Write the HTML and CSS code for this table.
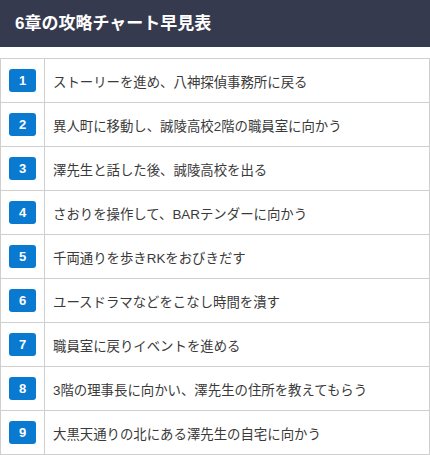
FILE: index.html
```html
<!DOCTYPE html>
<html lang="ja">
<head>
<meta charset="utf-8">
<link rel="stylesheet" href="styles.css">
</head>
<body>
<div class="head"><h2 class="title">6章の攻略チャート早見表</h2></div>
<table class="chart">
<tr><td class="num"><span class="badge">1</span></td><td class="txt">ストーリーを進め、八神探偵事務所に戻る</td></tr>
<tr><td class="num"><span class="badge">2</span></td><td class="txt">異人町に移動し、誠陵高校2階の職員室に向かう</td></tr>
<tr><td class="num"><span class="badge">3</span></td><td class="txt">澤先生と話した後、誠陵高校を出る</td></tr>
<tr><td class="num"><span class="badge">4</span></td><td class="txt">さおりを操作して、BARテンダーに向かう</td></tr>
<tr><td class="num"><span class="badge">5</span></td><td class="txt">千両通りを歩きRKをおびきだす</td></tr>
<tr><td class="num"><span class="badge">6</span></td><td class="txt">ユースドラマなどをこなし時間を潰す</td></tr>
<tr><td class="num"><span class="badge">7</span></td><td class="txt">職員室に戻りイベントを進める</td></tr>
<tr><td class="num"><span class="badge">8</span></td><td class="txt">3階の理事長に向かい、澤先生の住所を教えてもらう</td></tr>
<tr><td class="num"><span class="badge">9</span></td><td class="txt">大黒天通りの北にある澤先生の自宅に向かう</td></tr>
</table>
</body>
</html>
```
FILE: styles.css
```css
html, body {
  margin: 0;
  padding: 0;
  background: #fff;
}
body {
  width: 430px;
  font-family: "Liberation Sans", "Noto Sans CJK JP", sans-serif;
}
.head {
  background: #363a4e;
  height: 47px;
  display: flex;
  align-items: center;
  padding: 0 15px;
  box-sizing: border-box;
  margin-bottom: 11px;
}
.title {
  margin: 0;
  color: #fff;
  font-size: 17px;
  font-weight: bold;
  line-height: 1;
}
.chart {
  width: 430px;
  border-collapse: collapse;
}
.chart td {
  border: 1px solid #cfcfcf;
  height: 43px;
  padding: 0;
  vertical-align: middle;
}
.num {
  width: 43px;
  text-align: center;
}
.badge {
  display: inline-flex;
  align-items: center;
  justify-content: center;
  width: 27px;
  height: 23px;
  border-radius: 3px;
  background: #0a7ad1;
  color: #fff;
  font-weight: bold;
  font-size: 13px;
  vertical-align: middle;
}
.txt {
  padding-left: 8px !important;
  color: #3a3a3a;
  font-size: 13.4px;
}
```
